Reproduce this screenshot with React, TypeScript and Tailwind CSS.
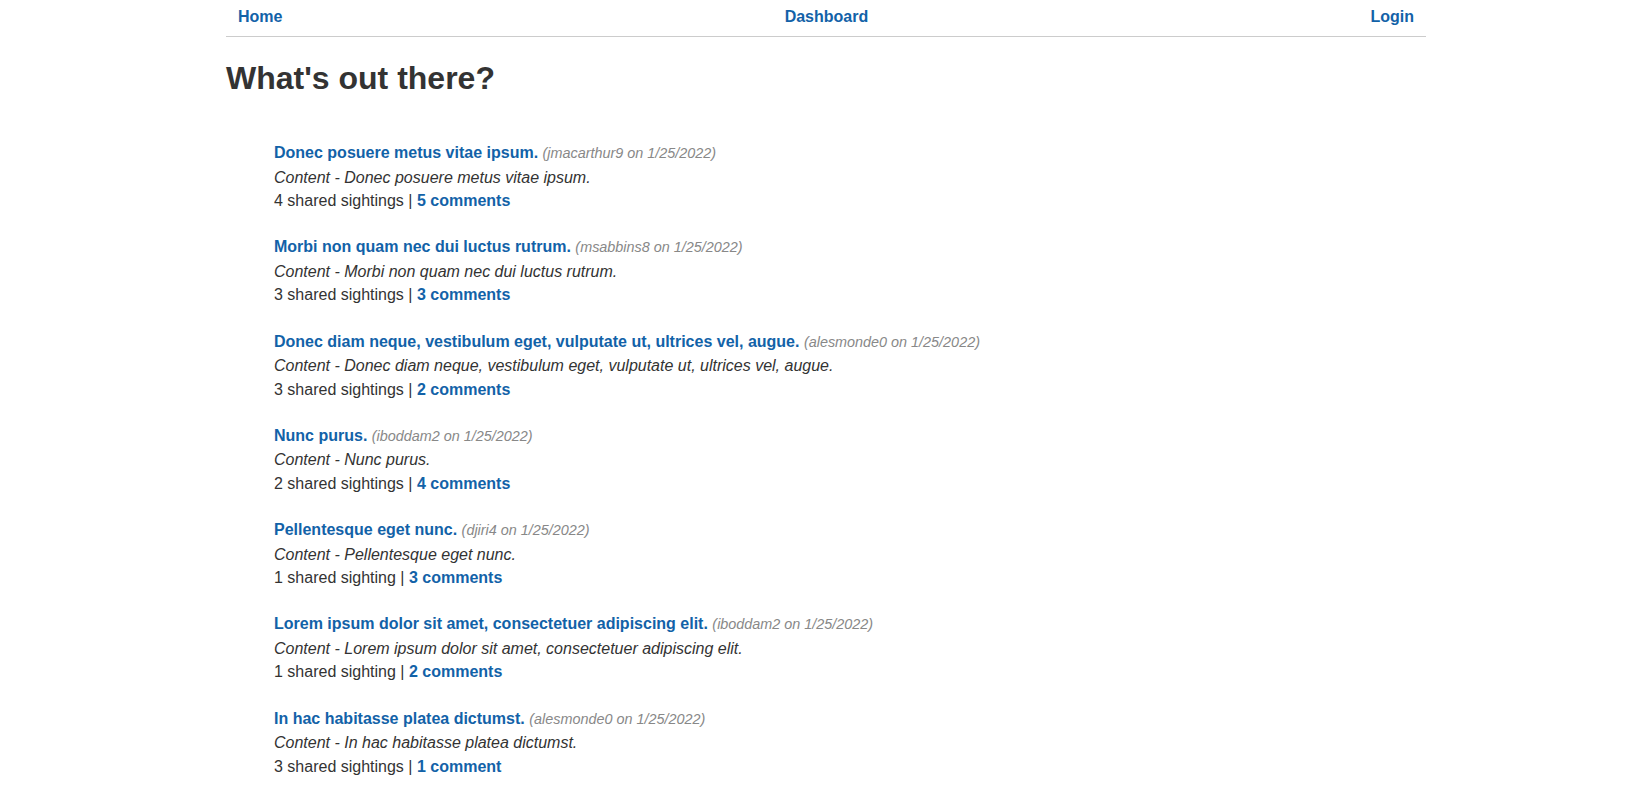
const posts = [
  { title: 'Donec posuere metus vitae ipsum.', user: 'jmacarthur9', sightings: 4, comments: 5 },
  { title: 'Morbi non quam nec dui luctus rutrum.', user: 'msabbins8', sightings: 3, comments: 3 },
  {
    title: 'Donec diam neque, vestibulum eget, vulputate ut, ultrices vel, augue.',
    user: 'alesmonde0',
    sightings: 3,
    comments: 2,
  },
  { title: 'Nunc purus.', user: 'iboddam2', sightings: 2, comments: 4 },
  { title: 'Pellentesque eget nunc.', user: 'djiri4', sightings: 1, comments: 3 },
  {
    title: 'Lorem ipsum dolor sit amet, consectetuer adipiscing elit.',
    user: 'iboddam2',
    sightings: 1,
    comments: 2,
  },
  { title: 'In hac habitasse platea dictumst.', user: 'alesmonde0', sightings: 3, comments: 1 },
];

export default function App() {
  return (
    <div
      className="flex min-h-screen justify-center bg-white pl-[9px] text-[#333]"
      style={{ fontFamily: '"Liberation Sans", Arial, sans-serif' }}
    >
      <div className="w-[1200px]">
        <nav className="flex items-center justify-between border-b border-[#ccc] px-3 pb-[7px] pt-[5px] text-base font-bold leading-6">
          <a href="#" className="text-[#1262a8]">
            Home
          </a>
          <a href="#" className="text-[#1262a8]">
            Dashboard
          </a>
          <a href="#" className="text-[#1262a8]">
            Login
          </a>
        </nav>

        <h1 className="mt-[22px] text-[32px] font-bold leading-[38px]">What's out there?</h1>

        <ul className="mt-[44px] flex flex-col gap-[22.8px] pl-12 text-base leading-[23.5px]">
          {posts.map((p) => (
            <li key={p.title}>
              <div>
                <a href="#" className="font-bold text-[#1262a8]">
                  {p.title}
                </a>{' '}
                <span className="text-[14.4px] italic text-[#888]">
                  ({p.user} on 1/25/2022)
                </span>
              </div>
              <div className="italic">Content - {p.title}</div>
              <div>
                {p.sightings} shared {p.sightings === 1 ? 'sighting' : 'sightings'} |{' '}
                <a href="#" className="font-bold text-[#1262a8]">
                  {p.comments} {p.comments === 1 ? 'comment' : 'comments'}
                </a>
              </div>
            </li>
          ))}
        </ul>
      </div>
    </div>
  );
}
